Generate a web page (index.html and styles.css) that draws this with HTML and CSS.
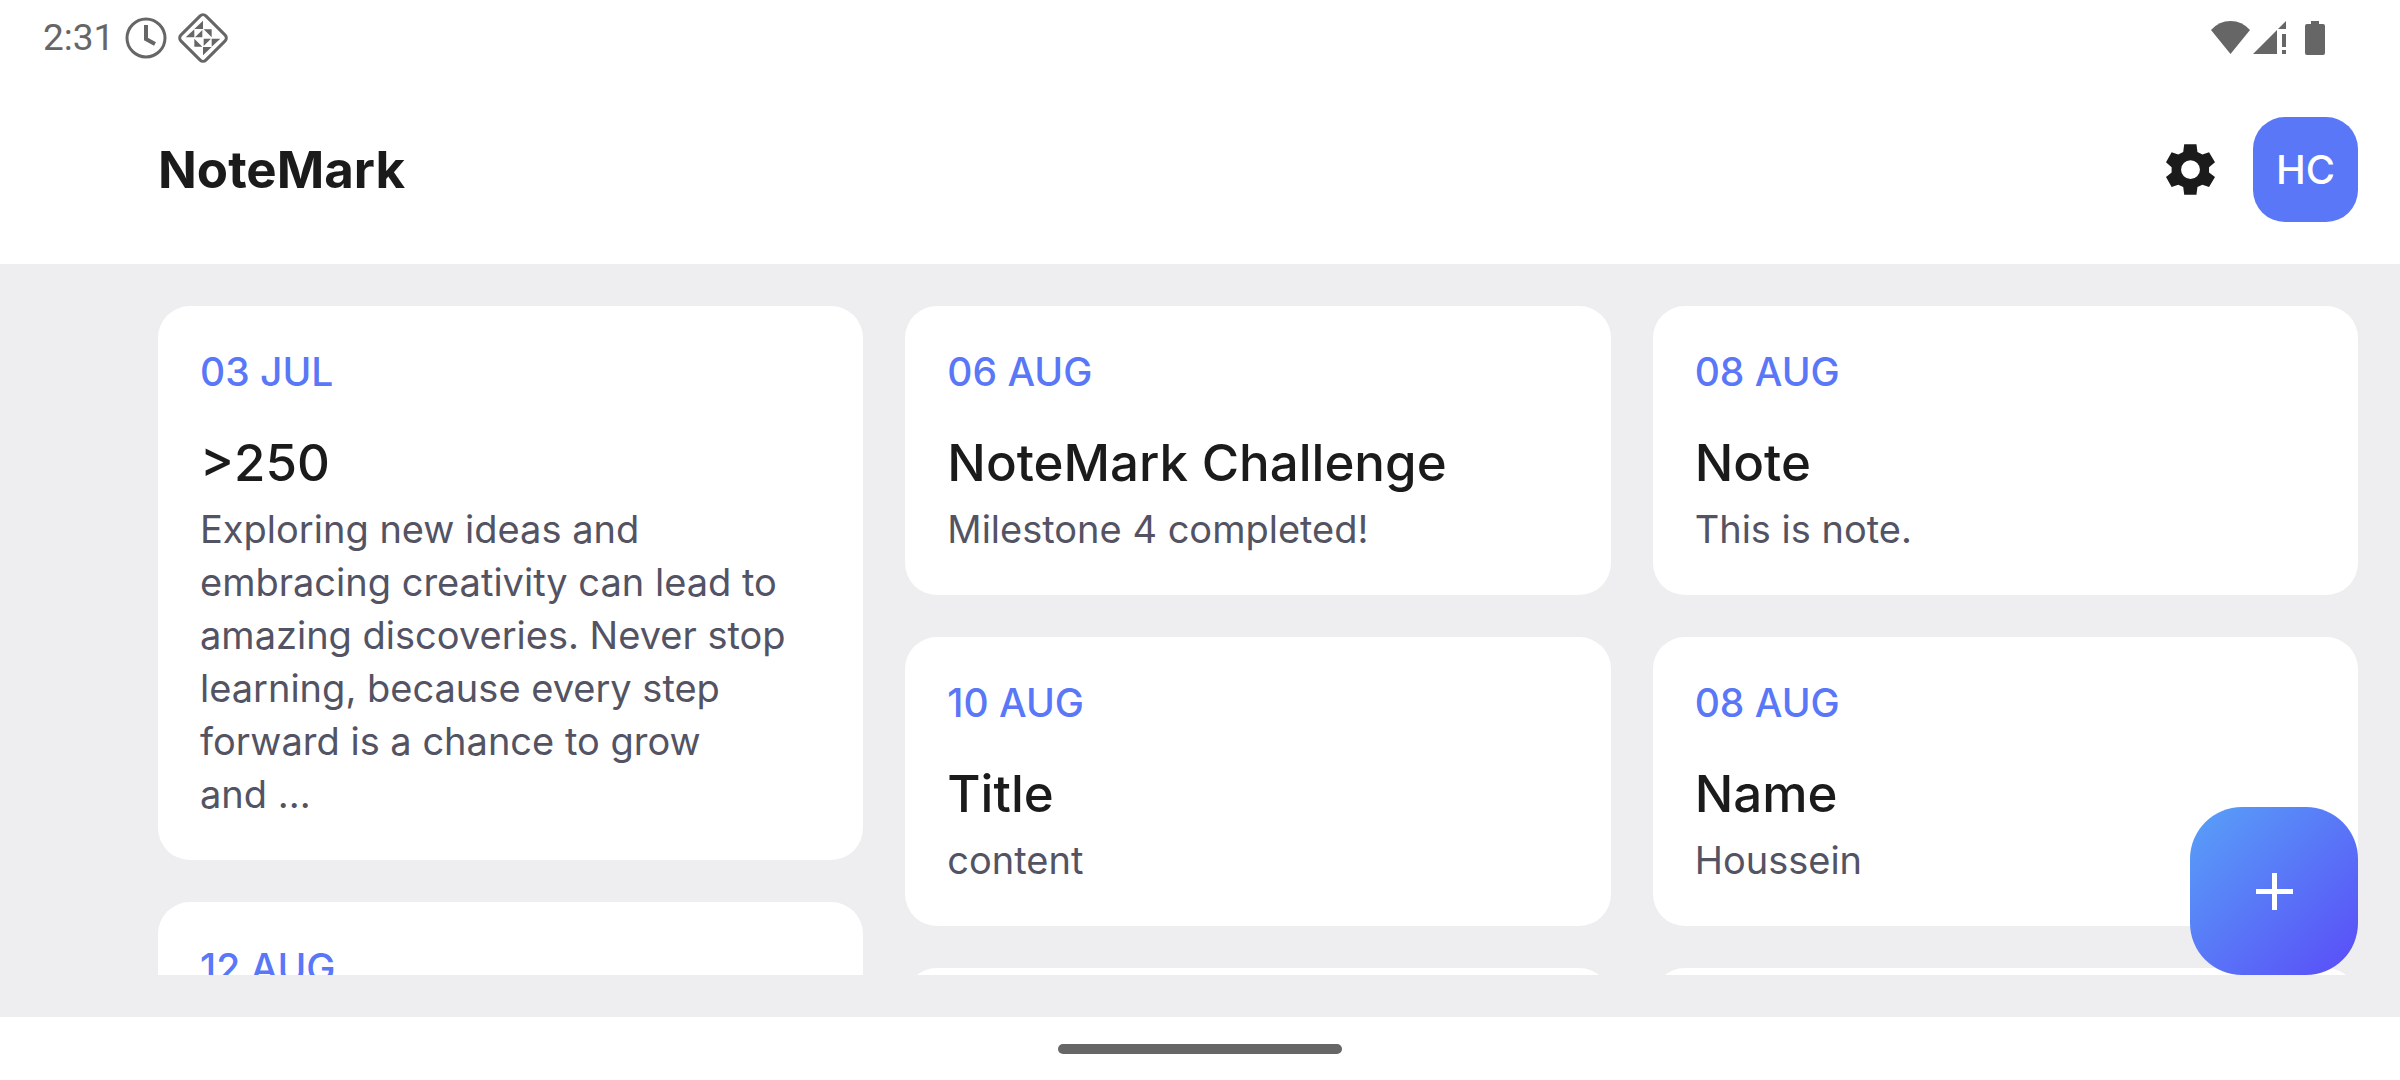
FILE: index.html
```html
<!DOCTYPE html>
<html lang="en">
<head>
  <meta charset="utf-8">
  <meta name="viewport" content="width=device-width, initial-scale=1">
  <title>NoteMark</title>
  <link rel="stylesheet" href="styles.css">
</head>
<body>
  <div class="status-bar">
    <div class="status-left">
      <time class="clock">2:31</time>
      <svg class="icon-alarm" viewBox="0 0 42 42" aria-hidden="true">
        <circle cx="21" cy="21" r="19" fill="none" stroke="currentColor" stroke-width="3"/>
        <path d="M21 8v14l9 5" fill="none" stroke="currentColor" stroke-width="4"/>
      </svg>
      <svg class="icon-diamond" viewBox="0 0 150 150" aria-hidden="true">
        <rect x="22" y="22" width="106" height="106" rx="12" transform="rotate(45 75 75)" fill="none" stroke="currentColor" stroke-width="9"/>
        <path fill="currentColor" d="M75 23V48H49zM23 73H49V49zM73 73H51L73 51zM77 49H101V73zM49 77V101H73zM77 77H99L77 99zM101 77H127L101 101zM75 102H101L75 127z"/>
      </svg>
    </div>
    <div class="status-right">
      <svg class="icon-wifi" viewBox="0 0 39 33" aria-hidden="true">
        <path fill="currentColor" d="M0 9Q8 0 19.500 0T39 9L19.500 33z"/>
      </svg>
      <svg class="icon-signal" viewBox="0 0 33 33" aria-hidden="true">
        <path fill="currentColor" d="M0 33L24 9v24zM25 8l8-8v8zM29 13h4v13h-4zM29 29h4v4h-4z"/>
      </svg>
      <svg class="icon-battery" viewBox="0 0 20 34" aria-hidden="true">
        <path fill="currentColor" d="M6 0h8v3h4q2 0 2 2v27q0 2-2 2H2q-2 0-2-2V5q0-2 2-2h4z"/>
      </svg>
    </div>
  </div>

  <header class="app-bar">
    <h1 class="app-title">NoteMark</h1>
    <div class="actions">
      <button class="settings" type="button" aria-label="Settings">
        <svg class="icon-gear" viewBox="0 0 148 152" aria-hidden="true">
          <path fill="currentColor" fill-rule="evenodd" d="M55 0H92L95 23L110 31L130 24L148 54L130 69V85L148 99L130 129L110 122L95 129L92 152H55L52 129L37 122L17 129L0 99L17 85V69L0 54L17 24L37 31L52 23ZM74 48a28 28 0 1 0 0 57a28 28 0 1 0 0-57z"/>
        </svg>
      </button>
      <button class="avatar" type="button" aria-label="Profile">HC</button>
    </div>
  </header>

  <main class="content">
    <div class="notes">
      <div class="column">
        <article class="note">
          <p class="note-date">03 JUL</p>
          <h2 class="note-title">&gt;250</h2>
          <p class="note-text">Exploring new ideas and embracing creativity can lead to amazing discoveries. Never stop learning, because every step forward is a chance to grow and&nbsp;...</p>
        </article>
        <article class="note">
          <p class="note-date">12 AUG</p>
        </article>
      </div>
      <div class="column">
        <article class="note">
          <p class="note-date">06 AUG</p>
          <h2 class="note-title">NoteMark Challenge</h2>
          <p class="note-text">Milestone 4 completed!</p>
        </article>
        <article class="note">
          <p class="note-date">10 AUG</p>
          <h2 class="note-title">Title</h2>
          <p class="note-text">content</p>
        </article>
        <article class="note"></article>
      </div>
      <div class="column">
        <article class="note">
          <p class="note-date">08 AUG</p>
          <h2 class="note-title">Note</h2>
          <p class="note-text">This is note.</p>
        </article>
        <article class="note">
          <p class="note-date">08 AUG</p>
          <h2 class="note-title">Name</h2>
          <p class="note-text">Houssein</p>
        </article>
        <article class="note"></article>
      </div>
    </div>
    <button class="fab" type="button" aria-label="New note">
      <svg class="icon-plus" viewBox="0 0 37 37" aria-hidden="true">
        <path fill="currentColor" d="M16 0h5v16h16v5H21v16h-5V21H0v-5h16z"/>
      </svg>
    </button>
  </main>

  <div class="nav-bar"><div class="nav-handle"></div></div>
</body>
</html>
```
FILE: styles.css
```css
* {
  box-sizing: border-box;
  margin: 0;
}

body {
  display: flex;
  flex-direction: column;
  height: 100vh;
  overflow: hidden;
  background: #ffffff;
  color: #1b1b1c;
  font-family: Inter, "Liberation Sans", sans-serif;
}

button {
  border: 0;
  padding: 0;
  font: inherit;
  cursor: pointer;
}

svg {
  display: block;
}

/* System status bar */
.status-bar {
  display: flex;
  justify-content: space-between;
  align-items: center;
  flex: none;
  height: 75px;
  padding: 0 75px 0 43px;
  color: #666666;
}

.status-left,
.status-right {
  display: flex;
  align-items: center;
}

.status-left {
  gap: 11px;
}

.status-right {
  gap: 3px;
}

.clock {
  font-family: Roboto, sans-serif;
  font-size: 37px;
  line-height: 44px;
}

.icon-alarm {
  width: 42px;
  height: 42px;
}

.icon-diamond {
  width: 50px;
  height: 50px;
}

.icon-wifi {
  width: 39px;
  height: 33px;
}

.icon-signal {
  width: 33px;
  height: 33px;
}

.icon-battery {
  width: 20px;
  height: 34px;
  margin-left: 16px;
}

/* App bar */
.app-bar {
  display: flex;
  justify-content: space-between;
  align-items: center;
  flex: none;
  padding: 42px 42px 42px 158px;
}

.app-title {
  font-size: 51px;
  font-weight: 700;
  line-height: 64px;
}

.actions {
  display: flex;
  align-items: center;
  gap: 10px;
}

.settings {
  display: grid;
  place-items: center;
  width: 105px;
  height: 105px;
  background: transparent;
  color: #1b1b1c;
}

.icon-gear {
  width: 49px;
  height: 51px;
}

.avatar {
  width: 105px;
  height: 105px;
  border-radius: 32px;
  background: #5977f7;
  color: #ffffff;
  font-size: 40px;
  font-weight: 500;
}

/* Notes */
.content {
  position: relative;
  flex: 1;
  min-height: 0;
  padding: 42px 42px 42px 158px;
  background: #eeeef0;
}

.notes {
  display: grid;
  grid-template-columns: repeat(3, minmax(0, 1fr));
  gap: 42px;
  height: 100%;
  overflow: hidden;
}

.column {
  display: flex;
  flex-direction: column;
  gap: 42px;
}

.note {
  flex: none;
  min-height: 289px;
  padding: 42px 42px 39px;
  border-radius: 32px;
  background: #ffffff;
}

.note-date {
  margin-bottom: 35px;
  color: #5977f7;
  font-size: 39px;
  font-weight: 500;
  line-height: 48px;
}

.note-title {
  margin-bottom: 8px;
  font-size: 51px;
  font-weight: 500;
  line-height: 64px;
}

.note-text {
  color: #535364;
  font-size: 38px;
  line-height: 53px;
}

.fab {
  position: absolute;
  right: 42px;
  bottom: 42px;
  display: grid;
  place-items: center;
  width: 168px;
  height: 168px;
  border-radius: 52px;
  background: linear-gradient(135deg, #58a1f8, #5a4cf7);
  color: #ffffff;
}

.icon-plus {
  width: 37px;
  height: 37px;
}

/* Gesture navigation */
.nav-bar {
  display: flex;
  justify-content: center;
  align-items: center;
  flex: none;
  height: 63px;
}

.nav-handle {
  width: 284px;
  height: 10px;
  border-radius: 5px;
  background: #666666;
}
```
